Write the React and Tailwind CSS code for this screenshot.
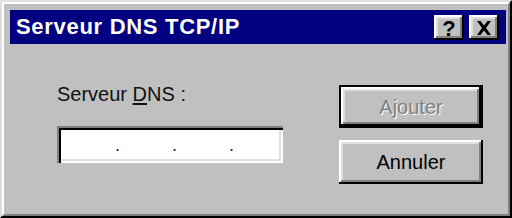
import React from "react";

const raised =
  "bg-[#c0c0c0] shadow-[inset_-2px_-2px_0_#000,inset_2px_2px_0_#fff,inset_-4px_-4px_0_#808080,inset_4px_4px_0_#dfdfdf]";

function TitleButton({ children }) {
  return (
    <div className={`w-[30px] h-[25px] flex items-center justify-center ${raised}`}>
      {children}
    </div>
  );
}

export default function App() {
  return (
    <div
      className="w-[512px] h-[218px] bg-[#c0c0c0] border-2 border-t-[#dfdfdf] border-l-[#dfdfdf] border-r-black border-b-black"
      style={{ fontFamily: '"Liberation Sans", Arial, sans-serif' }}
    >
      <div className="h-full border-2 border-t-white border-l-white border-r-[#808080] border-b-[#808080] pt-[6px] pl-[6px] pr-[2px]">
        {/* title bar */}
        <div className="h-[34px] bg-[#000080] flex items-center justify-between pl-[6px] pr-[7px]">
          <span className="text-white font-bold text-[22px] leading-none tracking-[0.7px]">
            Serveur DNS TCP/IP
          </span>
          <div className="flex gap-[5px] mt-[1px]">
            <TitleButton>
              <span className="font-bold text-[22px] leading-none text-black mt-[2px]">?</span>
            </TitleButton>
            <TitleButton>
              <svg width="16" height="14" viewBox="0 0 16 14">
                <path d="M1 0 L4.5 0 L8 4.5 L11.5 0 L15 0 L10 7 L15 14 L11.5 14 L8 9.5 L4.5 14 L1 14 L6 7 Z" fill="#000" />
              </svg>
            </TitleButton>
          </div>
        </div>

        {/* body */}
        <div className="flex pl-[47px]">
          <div className="w-[226px] pt-[40px]">
            <div className="text-[20px] leading-[20px] text-[#111]">
              Serveur <u className="underline-offset-2">D</u>NS :
            </div>
            <div className="mt-[22px] h-[37px] bg-white flex items-center pl-[6px] text-[18px] text-[#222] shadow-[inset_2px_2px_0_#808080,inset_4px_4px_0_#000,inset_-2px_-2px_0_#fff,inset_-4px_-4px_0_#dfdfdf]">
              <span className="w-[57px] text-right pt-[2px]">.</span>
              <span className="w-[57px] text-right pt-[2px]">.</span>
              <span className="w-[57px] text-right pt-[2px]">.</span>
            </div>
          </div>

          <div className="ml-[56px] pt-[41px] flex flex-col gap-[12px]">
            <div className="w-[144px] h-[43px] border-2 border-black">
              <div className={`w-full h-full flex items-center justify-center ${raised}`}>
                <span className="text-[20px] leading-none text-[#808080] [text-shadow:1px_1px_0_#fff]">
                  Ajouter
                </span>
              </div>
            </div>
            <div className={`w-[144px] h-[44px] flex items-center justify-center ${raised}`}>
              <span className="text-[20px] leading-none text-black">Annuler</span>
            </div>
          </div>
        </div>
      </div>
    </div>
  );
}
